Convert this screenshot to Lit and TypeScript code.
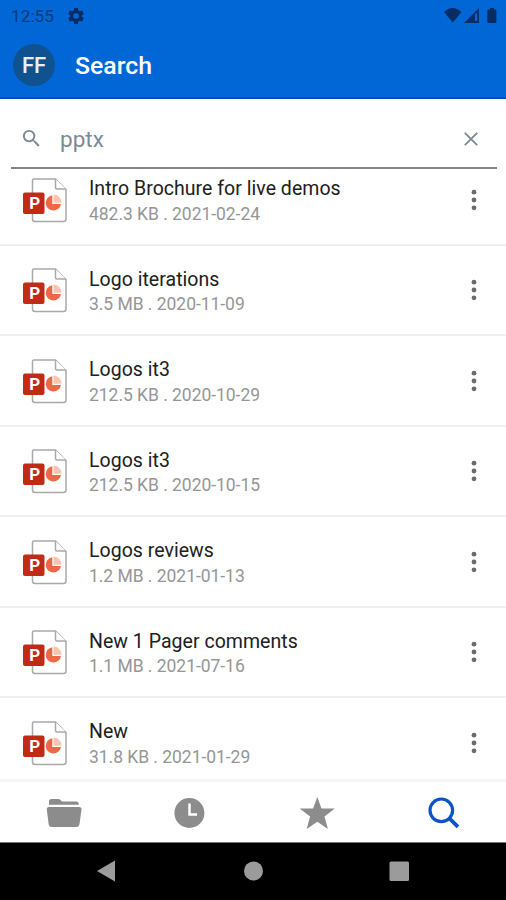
import { LitElement, html, css, svg } from "lit";
import { customElement } from "lit/decorators.js";

const files = [
  ["Intro Brochure for live demos", "482.3 KB . 2021-02-24"],
  ["Logo iterations", "3.5 MB . 2020-11-09"],
  ["Logos it3", "212.5 KB . 2020-10-29"],
  ["Logos it3", "212.5 KB . 2020-10-15"],
  ["Logos reviews", "1.2 MB . 2021-01-13"],
  ["New 1 Pager comments", "1.1 MB . 2021-07-16"],
  ["New", "31.8 KB . 2021-01-29"],
];

const magnifier = svg`<path d="M15.5 14h-.79l-.28-.27A6.471 6.471 0 0 0 16 9.5 6.5 6.5 0 1 0 9.5 16c1.61 0 3.09-.59 4.23-1.57l.27.28v.79l5 4.99L20.49 19l-4.99-5zm-6 0C7.01 14 5 11.99 5 9.5S7.01 5 9.5 5 14 7.01 14 9.5 11.99 14 9.5 14z"/>`;

@customElement("file-row")
class FileRow extends LitElement {
  static properties = { name: {}, meta: {} };
  declare name: string;
  declare meta: string;
  static styles = css`
    :host {
      display: flex;
      box-sizing: border-box;
      height: 90.5px;
      padding: 0 22px 0 23px;
      border-bottom: 2px solid #efefef;
      font-family: Roboto, "Liberation Sans", sans-serif;
    }
    .doc { width: 45px; height: 45px; margin-top: 22.5px; flex: none; }
    .letter { font: 700 17px Roboto, sans-serif; fill: #fff; }
    .text { flex: 1; margin-left: 21px; padding-top: 22.3px; white-space: nowrap; }
    .name { font-size: 19.5px; line-height: 24px; letter-spacing: 0.03px; color: #202020; }
    .meta { font-size: 17.5px; line-height: 24px; margin-top: 0.2px; letter-spacing: -0.04px; color: #969696; }
    .more { width: 20px; height: 24px; margin-top: 32.5px; flex: none; fill: #6b6b6b; }
  `;
  render() {
    return html`
      <svg class="doc" viewBox="0 0 45 45">
        <path d="M11 1H32.5L43 11.5V41a2.5 2.5 0 0 1-2.5 2.5H12A2.5 2.5 0 0 1 9.5 41V2.5A1.5 1.5 0 0 1 11 1Z" fill="#fff" stroke="#a9a9a9" stroke-width="1.5"/>
        <path d="M32.5 1V9.5a1.5 1.5 0 0 0 1.5 1.5H43" fill="#fff" stroke="#a9a9a9" stroke-width="1.5"/>
        <path d="M29.3 17.2A7.7 7.7 0 1 0 38 26H29.3Z" fill="#ec6847"/>
        <path d="M30.5 16.5A8 8 0 0 1 38.5 24.7H30.5Z" fill="#fac4b0"/>
        <rect x="0" y="14.5" width="21.5" height="21.5" rx="2" fill="#c12a17"/>
        <text class="letter" x="6.2" y="31.2">P</text>
      </svg>
      <div class="text">
        <div class="name">${this.name}</div>
        <div class="meta">${this.meta}</div>
      </div>
      <svg class="more" viewBox="0 0 20 24">
        <circle cx="10" cy="4.2" r="2.4"/><circle cx="10" cy="12" r="2.4"/><circle cx="10" cy="19.8" r="2.4"/>
      </svg>
    `;
  }
}

@customElement("app-root")
class AppRoot extends LitElement {
  static styles = css`
    :host {
      display: flex;
      flex-direction: column;
      width: 506px;
      height: 900px;
      overflow: hidden;
      background: #fff;
      font-family: Roboto, "Liberation Sans", sans-serif;
    }
    svg { display: block; flex: none; }
    header {
      box-sizing: border-box;
      height: 99px;
      flex: none;
      background: #0166d6;
      border-bottom: 2px solid #0a49bd;
    }
    .status { display: flex; align-items: center; height: 31px; padding: 0 8px 0 11px; color: #063a7d; fill: #052d63; }
    .time { font-size: 17.3px; width: 57px; }
    .spacer { flex: 1; }
    .bar { display: flex; align-items: center; height: 67px; padding-left: 13px; }
    .avatar {
      width: 42px; height: 42px; border-radius: 50%; background: #10528f;
      color: #e9eef8; font-size: 22px; font-weight: 500; line-height: 43px; text-align: center;
    }
    .title { margin-left: 20px; padding-top: 2px; font-size: 24.8px; font-weight: 500; color: #fff; }
    .search {
      box-sizing: border-box; display: flex; align-items: center; flex: none;
      height: 70px; margin: 0 9px 0 11px; padding: 11px 15px 0 9px;
      border-bottom: 2px solid #858585; fill: #7d8791;
    }
    .query { flex: 1; margin-left: 17px; padding-top: 1px; font-size: 22.5px; color: #7c8996; }
    .list { flex: 1; overflow: hidden; min-height: 0; }
    .list file-row:first-child { margin-top: -13.9px; }
    nav {
      box-sizing: border-box; flex: none; height: 63px; display: flex; align-items: center;
      justify-content: space-between; padding: 2px 41px 0 45px; border-top: 3px solid #f5f5f5; fill: #8c8c8c;
    }
    .system {
      box-sizing: border-box; flex: none; height: 58px; display: flex; justify-content: space-between; align-items: center;
      padding: 0 96px 1px; background: #000; border-top: 1px solid #777; fill: #9b9b9b;
    }
  `;
  render() {
    return html`
      <header>
        <div class="status">
          <span class="time">12:55</span>
          <svg width="16" height="16" viewBox="2 2 20 20"><path d="M19.43 12.98c.04-.32.07-.64.07-.98s-.03-.66-.07-.98l2.11-1.65c.19-.15.24-.42.12-.64l-2-3.46c-.12-.22-.39-.3-.61-.22l-2.49 1c-.52-.4-1.08-.73-1.69-.98l-.38-2.65A.488.488 0 0 0 14 2h-4c-.25 0-.46.18-.49.42l-.38 2.65c-.61.25-1.17.59-1.69.98l-2.49-1c-.23-.09-.49 0-.61.22l-2 3.46c-.13.22-.07.49.12.64l2.11 1.65c-.04.32-.07.65-.07.98s.03.66.07.98l-2.11 1.65c-.19.15-.24.42-.12.64l2 3.46c.12.22.39.3.61.22l2.49-1c.52.4 1.08.73 1.69.98l.38 2.65c.03.24.24.42.49.42h4c.25 0 .46-.18.49-.42l.38-2.65c.61-.25 1.17-.59 1.69-.98l2.49 1c.23.09.49 0 .61-.22l2-3.46c.12-.22.07-.49-.12-.64l-2.11-1.65zM12 15.5A3.5 3.5 0 1 1 12 8.5a3.5 3.5 0 0 1 0 7z"/></svg>
          <span class="spacer"></span>
          <svg width="54" height="18" viewBox="0 0 54 18">
            <path d="M0 5Q8.5-3 17.5 5L8.8 15.6Z"/>
            <path d="M20 16 35 1V16ZM31 7.5V14H33.2V5.3Z" fill-rule="evenodd"/>
            <path d="M46 1h4V2.5h1.2a1.2 1.2 0 0 1 1.2 1.2V14.8a1.2 1.2 0 0 1-1.2 1.2h-6.7a1.2 1.2 0 0 1-1.2-1.2V3.7A1.2 1.2 0 0 1 44.5 2.5H46Z"/>
          </svg>
        </div>
        <div class="bar"><div class="avatar">FF</div><div class="title">Search</div></div>
      </header>
      <div class="search">
        <svg width="23" height="23" viewBox="0 0 24 24">${magnifier}</svg>
        <span class="query">pptx</span>
        <svg width="22" height="22" viewBox="0 0 22 22"><path d="M4.8 4.8 17.2 17.2M17.2 4.8 4.8 17.2" stroke="#7d8791" stroke-width="1.8"/></svg>
      </div>
      <div class="list">${files.map(([n, m]) => html`<file-row .name=${n} .meta=${m}></file-row>`)}</div>
      <nav>
        <svg width="38" height="36" viewBox="0 0 38 36">
          <path d="M4 9V6.5Q4 4 6.5 4H13.5Q15 4 16 5.5L17 6.5H31Q33.5 6.5 34 9.8H4Z"/>
          <path d="M4 12H34Q36.8 12 36.5 14.5L34.5 29Q34 32 31.5 32H6.5Q4 32 3.6 29L1.8 14.5Q1.5 12 4 12Z"/>
        </svg>
        <svg width="38" height="36" viewBox="0 0 38 36"><circle cx="17.4" cy="18" r="15"/><path d="M17.5 8.5V19.6H25" fill="none" stroke="#fff" stroke-width="2.5"/></svg>
        <svg width="38" height="36" viewBox="0 0 38 36"><path d="M17.3 2 21.5 13.6H34.8L24.5 21.5 27.9 34 17.3 26.8 6.7 34 10.1 21.5 -.2 13.6H13.1Z"/></svg>
        <svg width="38" height="36" viewBox="0 0 38 36" fill="none" stroke="#0c53c6"><circle cx="14.3" cy="15.3" r="11.3" stroke-width="3.2"/><path d="M22.6 23.6 31 31.8" stroke-width="3.8"/></svg>
      </nav>
      <div class="system">
        <svg width="22" height="22" viewBox="0 0 22 22"><path d="M19 .5V21.5L1 11Z"/></svg>
        <svg width="20" height="20" viewBox="0 0 20 20"><circle cx="10.5" cy="10" r="9.5"/></svg>
        <svg width="22" height="20" viewBox="0 0 22 20"><rect x="1.5" y=".5" width="19.5" height="19.5" rx="1.5"/></svg>
      </div>
    `;
  }
}
